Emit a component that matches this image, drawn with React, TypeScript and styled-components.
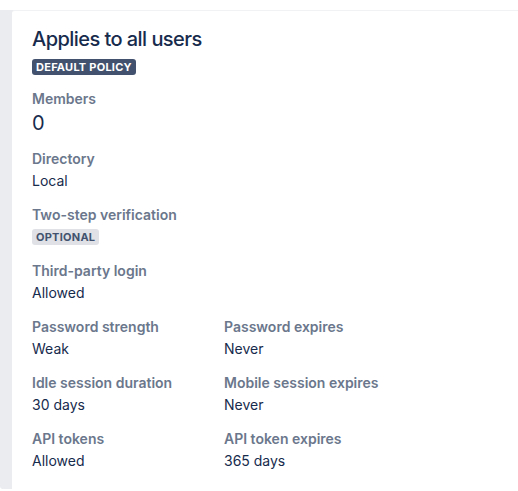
import React from "react";
import styled, { createGlobalStyle } from "styled-components";

const Global = createGlobalStyle`
  html, body { margin: 0; padding: 0; background: #ffffff; }
  body {
    font-family: Inter, "Noto Sans", "Liberation Sans", sans-serif;
    -webkit-font-smoothing: antialiased;
  }
`;

const Page = styled.div`
  padding-top: 10px;
  height: 491px;
  box-sizing: border-box;
`;

const Shell = styled.div`
  background: #ebecf0;
  padding-left: 12px;
  height: 479px;
  border-bottom-left-radius: 3px;
`;

const Card = styled.section`
  background: #ffffff;
  border-top: 1px solid #f1f2f4;
  border-top-left-radius: 3px;
  height: 100%;
  box-sizing: border-box;
  padding: 16px 20px 0 20px;
`;

const Title = styled.h2`
  margin: 0;
  font-size: 20px;
  line-height: 24px;
  font-weight: 500;
  color: #172b4d;
  letter-spacing: -0.55px;
`;

const Lozenge = styled.span<{ $bold?: boolean }>`
  display: inline-flex;
  align-items: center;
  height: 16px;
  padding: 0 4px;
  border-radius: 3px;
  font-size: 11px;
  font-weight: 700;
  letter-spacing: 0.25px;
  text-transform: uppercase;
  background: ${(p) => (p.$bold ? "#42526e" : "#dfe1e6")};
  color: ${(p) => (p.$bold ? "#ffffff" : "#42526e")};
`;

const TitleBlock = styled.div`
  display: flex;
  flex-direction: column;
  align-items: flex-start;
  gap: 8px;
  margin-bottom: 14px;
`;

const Grid = styled.div`
  display: grid;
  grid-template-columns: 192px 192px;
  row-gap: 12px;
`;

const Field = styled.div<{ $full?: boolean }>`
  grid-column: ${(p) => (p.$full ? "1 / -1" : "auto")};
  display: flex;
  flex-direction: column;
  align-items: flex-start;
`;

const Label = styled.div`
  font-size: 14px;
  line-height: 20px;
  font-weight: 600;
  color: #6b778c;
`;

const Value = styled.div<{ $big?: boolean }>`
  font-size: ${(p) => (p.$big ? "20px" : "14px")};
  line-height: ${(p) => (p.$big ? "28px" : "24px")};
  font-weight: 400;
  color: #172b4d;
  display: flex;
  align-items: center;
  min-height: 24px;
`;

export default function App() {
  return (
    <>
      <Global />
      <Page>
        <Shell>
          <Card>
            <TitleBlock>
              <Title>Applies to all users</Title>
              <Lozenge $bold>Default policy</Lozenge>
            </TitleBlock>
            <Grid>
              <Field $full>
                <Label>Members</Label>
                <Value $big>0</Value>
              </Field>
              <Field $full>
                <Label>Directory</Label>
                <Value>Local</Value>
              </Field>
              <Field $full>
                <Label>Two-step verification</Label>
                <Value>
                  <Lozenge>Optional</Lozenge>
                </Value>
              </Field>
              <Field $full>
                <Label>Third-party login</Label>
                <Value>Allowed</Value>
              </Field>
              <Field>
                <Label>Password strength</Label>
                <Value>Weak</Value>
              </Field>
              <Field>
                <Label>Password expires</Label>
                <Value>Never</Value>
              </Field>
              <Field>
                <Label>Idle session duration</Label>
                <Value>30 days</Value>
              </Field>
              <Field>
                <Label>Mobile session expires</Label>
                <Value>Never</Value>
              </Field>
              <Field>
                <Label>API tokens</Label>
                <Value>Allowed</Value>
              </Field>
              <Field>
                <Label>API token expires</Label>
                <Value>365 days</Value>
              </Field>
            </Grid>
          </Card>
        </Shell>
      </Page>
    </>
  );
}
